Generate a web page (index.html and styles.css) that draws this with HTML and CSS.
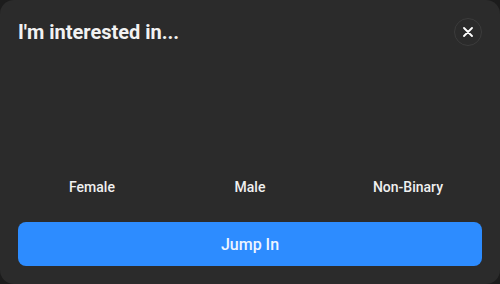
FILE: index.html
```html
<!DOCTYPE html>
<html lang="en">

<head>
    <meta charset="UTF-8">
    <meta name="viewport" content="width=device-width, initial-scale=1.0">
    <title>I'm interested in...</title>
    <link rel="stylesheet" href="styles.css">
</head>

<body>
    <div class="modal">
        <div class="modal-header">
            <h2 class="modal-title">I'm interested in...</h2>
            <button class="close-btn" aria-label="Close">
                <svg width="10" height="10" viewBox="0 0 10 10">
                    <path d="M1 1L9 9M9 1L1 9" stroke="#fff" stroke-width="1.8" stroke-linecap="round" />
                </svg>
            </button>
        </div>

        <div class="options">
            <div class="option">Female</div>
            <div class="option">Male</div>
            <div class="option">Non-Binary</div>
        </div>

        <button class="jump-btn">Jump In</button>
    </div>
</body>

</html>
```

FILE: styles.css
```css
* {
    margin: 0;
    padding: 0;
    box-sizing: border-box;
    font-family: Roboto, "Liberation Sans", Arial, sans-serif;
}

body {
    background: #1c1c1c;
    width: 500px;
    height: 284px;
    overflow: hidden;
}

.modal {
    width: 500px;
    height: 284px;
    background: #2b2b2b;
    border-radius: 14px;
    padding: 18px;
    display: flex;
    flex-direction: column;
}

.modal-header {
    display: flex;
    justify-content: space-between;
    align-items: center;
    height: 28px;
}

.modal-title {
    font-size: 20px;
    font-weight: 700;
    color: #f2f2f2;
    line-height: 28px;
}

.close-btn {
    width: 28px;
    height: 28px;
    border-radius: 50%;
    border: 1px solid #3c3c3c;
    background: #2b2b2b;
    display: flex;
    align-items: center;
    justify-content: center;
    cursor: pointer;
}

.options {
    flex: 1;
    display: flex;
    justify-content: center;
    align-items: flex-end;
    margin: 0 -5px;
    padding-bottom: 25px;
}

.option {
    flex: 1;
    text-align: center;
    font-size: 14px;
    font-weight: 500;
    color: #f0f0f0;
    line-height: 20px;
    cursor: pointer;
}

.jump-btn {
    height: 44px;
    width: 100%;
    border: none;
    border-radius: 8px;
    background: #2d8cff;
    color: #eef5ff;
    font-size: 16px;
    font-weight: 500;
    cursor: pointer;
}
```
